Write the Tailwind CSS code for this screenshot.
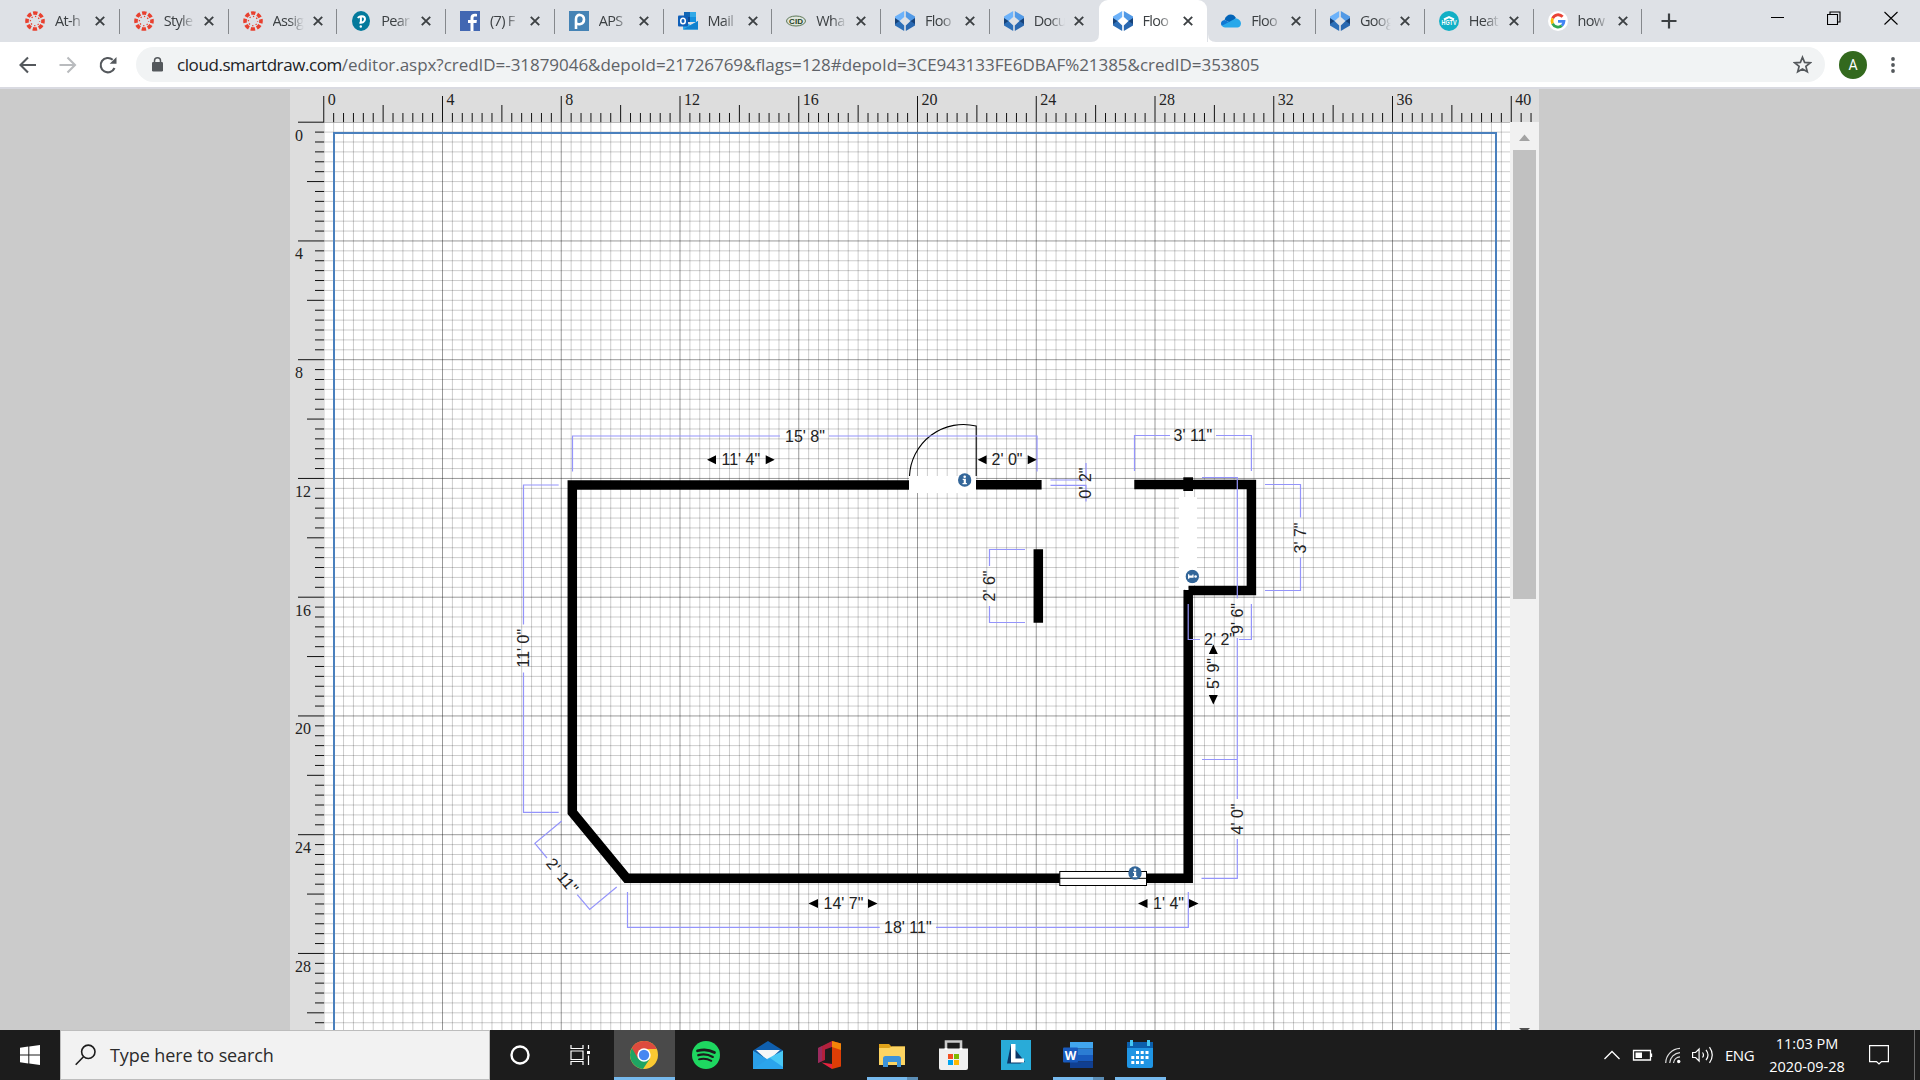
<!DOCTYPE html>
<html lang="en">
<head>
<meta charset="utf-8">
<title>Floor plan</title>
<script src="https://cdn.jsdelivr.net/npm/@tailwindcss/browser@4"></script>
</head>
<body class="w-[1920px] h-[1080px] overflow-hidden bg-[#cbcbcb] font-['Open_Sans',sans-serif] flex flex-col">

<svg class="hidden">
  <defs>
    <symbol id="canvas" viewBox="0 0 20 20"><g fill="none" stroke="#e8402f"><circle cx="10" cy="10" r="8" stroke-width="3.6" stroke-dasharray="4.3 1.98" stroke-dashoffset="2.1"/><circle cx="10" cy="10" r="4.6" stroke-width="1.3" stroke-dasharray="1.3 2.31" stroke-dashoffset=".6"/></g></symbol>
    <symbol id="pearson" viewBox="0 0 20 20"><ellipse cx="10" cy="10" rx="9" ry="10" fill="#047a9c"/><path d="M7 7.2C8 4.6 14 4.3 14 8c0 3-3 4.2-5.600 3.600M9.900 6v6.800" fill="none" stroke="#fff" stroke-width="2"/><circle cx="9.800" cy="15.500" r="1.200" fill="#fff"/></symbol>
    <symbol id="facebook" viewBox="0 0 20 20"><rect width="20" height="20" fill="#4267b2"/><path d="M13.500 20v-8h3l.4-3h-3.400V7.200c0-1 .4-1.600 1.600-1.600H17V3c-4-.7-6.500.4-6.500 4v2H8v3h2.500v8z" fill="#fff"/></symbol>
    <symbol id="aps" viewBox="0 0 20 20"><rect width="20" height="20" fill="#4583b5"/><path d="M7 18V8c0-6 8-5 8 .5S8.500 14 7 12" fill="none" stroke="#fff" stroke-width="2.600"/></symbol>
    <symbol id="outlook" viewBox="0 0 20 20"><path d="M6 1h12v10H6z" fill="#1066b5"/><path d="M12 1h6v5h-6z" fill="#32a9e7"/><path d="M6 6h6v5H6z" fill="#0b4a94"/><path d="M12 6h6v5h-6z" fill="#1490df"/><path d="M5 10l7.500 4L20 10v8.500H5z" fill="#28a8ea"/><path d="M5 18.500L20 10v8.500z" fill="#1282cf"/><rect y="4.500" width="10" height="11" rx="1" fill="#0f5fb8"/><ellipse cx="5" cy="10" rx="2.300" ry="2.800" fill="none" stroke="#fff" stroke-width="1.500"/></symbol>
    <symbol id="cid" viewBox="0 0 20 20"><ellipse cx="10" cy="10" rx="9.500" ry="5" fill="#dfe5dc" stroke="#5c7757"/><text x="10" y="12.900" text-anchor="middle" font-size="8" font-weight="700" font-family="Liberation Sans" textLength="14" fill="#23421f">CID</text></symbol>
    <symbol id="sd" viewBox="0 0 20 20"><path d="M9.200 0v6L4.500 10H0V5.500z" fill="#6cb2fa"/><path d="M10.800 0v6l4.700 4H20V5.500z" fill="#5199e6"/><path d="M0 10l4.500 0 4.700 4.500V20L0 14.500z" fill="#2d6fb8"/><path d="M20 10h-4.500l-4.700 4.500V20l9.200-5.500z" fill="#2a68b0"/><path d="M0 7l4.500 3L0 13zM20 7l-4.500 3 4.500 3z" fill="#174278"/></symbol>
    <symbol id="onedrive" viewBox="0 0 20 20"><path d="M3.500 9C5 3 12 1.500 15 7l-5 5z" fill="#0364b8"/><path d="M3.500 9C1 9.300 0 11 0 12.500q0 1.500 1 2.500l9-3z" fill="#0f78d4"/><path d="M1 14.800L15 7.300c3 .7 5 2.700 5 5.200 0 2.500-2 4-3.500 4H4c-1.500 0-2.500-.8-3-1.700z" fill="#28a8ea"/></symbol>
    <symbol id="hgtv" viewBox="0 0 20 20"><circle cx="10" cy="10" r="10" fill="#12b0c6"/><path d="M5 8.500L10 6l5 2.500" fill="none" stroke="#fff" stroke-width="2"/><text x="10" y="13.500" text-anchor="middle" font-size="6.500" font-weight="700" font-family="Liberation Sans" textLength="15" lengthAdjust="spacingAndGlyphs" fill="#fff">HGTV</text></symbol>
    <symbol id="google" viewBox="0 0 20 20"><circle cx="10" cy="10" r="10" fill="#fff"/><g fill="none" stroke-width="2.800"><path d="M14.600 5.800A6 6 0 0 0 4.600 7.400" stroke="#ea4335"/><path d="M4.600 7.400a6 6 0 0 0 0 5.200" stroke="#fbbc05"/><path d="M4.600 12.600a6 6 0 0 0 9.300 2" stroke="#34a853"/><path d="M13.900 14.600A6 6 0 0 0 16 10.300h-6" stroke="#4285f4"/></g></symbol>
    <symbol id="x" viewBox="0 0 10 10"><path d="M.8.8l8.400 8.400M9.200.8L.8 9.200" stroke="#3c4043" stroke-width="1.900" fill="none"/></symbol>
    <symbol id="info" viewBox="-7 -7 14 14"><circle r="6.700" fill="#336699"/><circle cy="-3.300" r="1.300" fill="#fff"/><path d="M-2-1.300H1.200V3H2.200V4.300H-2.200V3H-1V0H-2z" fill="#fff"/></symbol>
  </defs>
</svg>

<!-- tab strip -->
<header class="h-[42px] shrink-0 bg-[#dee1e6] flex">
  <div id="tabs" class="flex pl-[11px]"></div>
  <svg class="w-4 h-4 mt-[13px] ml-[19px]" viewBox="0 0 16 16"><path d="M8 .5v15M.5 8h15" stroke="#3c4043" stroke-width="2.200"/></svg>
  <div class="flex ml-auto pr-[22px] gap-[43px] pt-[11px]">
    <svg class="w-[14px] h-[14px]" viewBox="0 0 14 14"><path d="M1 6.500h13" stroke="#000"/></svg>
    <svg class="w-[14px] h-[14px]" viewBox="0 0 14 14"><path d="M.5 3.500h10v10H.5zM3 3.500v-2.500h10v10h-2.500" stroke="#000" fill="none" stroke-width="1.100"/></svg>
    <svg class="w-[14px] h-[14px]" viewBox="0 0 14 14"><path d="M.5 1l13 12.500M13.500 1L.5 13.500" stroke="#000" stroke-width="1.100"/></svg>
  </div>
</header>

<!-- toolbar -->
<div class="h-[45px] shrink-0 bg-white flex items-center">
  <svg class="w-[100px] h-5 ml-[18px] shrink-0" viewBox="0 0 100 20" fill="none" stroke-width="2.100"><path d="M18 10H3M10 2.500L2.500 10l7.500 7.500" stroke="#54585c"/><path d="M41.500 10h15M49.500 2.500L57 10l-7.500 7.500" stroke="#b9bbbe"/><path d="M96.500 13a7.200 7.200 0 1 1-1.800-8.200" stroke="#54585c"/><path d="M98.500 2v6.800h-6.800z" fill="#54585c"/></svg>
  <div class="ml-[18px] w-[1689px] h-[35px] rounded-full bg-[#f1f3f4] flex items-center shrink-0 pl-4">
    <svg class="w-[11px] h-[15px]" viewBox="0 0 11 15"><rect y="5" width="11" height="9.500" rx="1.300" fill="#54585c"/><path d="M2.500 6V3.800a3 3 0 0 1 6 0V6" fill="none" stroke="#54585c" stroke-width="1.500"/></svg>
    <div class="ml-[14px] text-[17px] leading-none whitespace-nowrap text-[#5f6368] tracking-[-0.04px]"><span class="text-[#202124] tracking-[-0.42px]">cloud.smartdraw.com</span>/editor.aspx?credID=-31879046&amp;depoId=21726769&amp;flags=128#depoId=3CE943133FE6DBAF%21385&amp;credID=353805</div>
    <svg class="w-[19px] h-[19px] ml-auto mr-[13px]" viewBox="0 0 19 19"><path d="M9.500 2.200l2.100 5.200 5.600.4-4.300 3.600 1.400 5.400-4.800-2.900-4.800 2.900 1.400-5.400L1.800 7.800l5.600-.4z" fill="none" stroke="#54585c" stroke-width="1.700"/></svg>
  </div>
  <div class="ml-[14px] w-7 h-7 rounded-full bg-[#33691e] text-white text-[14px] flex items-center justify-center pt-px font-['Roboto',sans-serif]">A</div>
  <svg class="w-1 h-4 ml-[24px]" viewBox="0 0 4 16" fill="#54585c"><circle cx="2" cy="2" r="1.900"/><circle cx="2" cy="8" r="1.900"/><circle cx="2" cy="14" r="1.900"/></svg>
</div>
<div class="h-[2px] shrink-0 bg-[#d9dae1]"></div>

<!-- editor -->
<main class="h-[941px] shrink-0 pl-[290px] flex">
  <svg class="w-[1249px] h-[941px] bg-white" viewBox="290 89 1249 941">
    <g id="grid"></g>
    <path d="M334 1040V133H1496V1040" fill="none" stroke="#4a80bd" stroke-width="2"/>
    <path d="M290 89H1539V122H324V1030H290z" fill="#ddd"/>
    <g id="ruler" font-family="Liberation Serif" font-size="16" fill="#222"></g>
    <path d="M1510 122H1539V1030H1510z" fill="#f1f1f1"/>
    <path d="M1513 150H1536V599H1513z" fill="#c1c1c1"/>
    <path d="M1519 141H1530L1524.500 134.500z" fill="#a3a3a3"/>
    <path d="M1519 1028H1530L1526 1032H1523z" fill="#505050"/>

    <g fill="none" stroke="#000" stroke-width="9.500">
      <path d="M909 485H572.300V812.300L626.700 878.300H1188.200V590"/>
      <path d="M976 484.800H1041.600M1134.300 484.500H1251.400V590.500H1188.500M1038.300 549.300V622.700"/>
    </g>
    <path d="M1183.300 477.300H1193V491H1183.300z"/>
    <path d="M909 476H976V493H909zM1179 497H1197V585H1188V589H1179z" fill="#fff"/>
    <path d="M909.500 476A54 54 0 0 1 976.200 426V476" fill="none" stroke="#000" stroke-width="1.100"/>
    <rect x="1059.800" y="871.500" width="86.700" height="14" fill="#fff" stroke="#000"/>
    <path d="M1059.800 878.300H1146.500" stroke="#000"/>

    <g fill="none" stroke="#9494fb" stroke-width="1.200">
      <path d="M572.500 471.500V436H780M829 436H1037V471.500"/>
      <path d="M1050.500 480H1086V463M1050.500 485.300H1086V501.500"/>
      <path d="M1134.500 471V435.500H1170M1216 435.500H1251.400V471"/>
      <path d="M1265 484.500H1300.500V517.500M1300.500 557.500V590.500H1265"/>
      <path d="M1025 549.500H989.500V566M989.500 606V622.500H1025"/>
      <path d="M1202 477.500H1237.300V598.500M1237.300 638V799M1202 759.500H1237.300M1237.300 839V878.300H1201.500"/>
      <path d="M1188.200 604V639.500H1200M1239 639.500H1251.400V604"/>
      <path d="M627.500 892V927.300H879.700M936 927.300H1188.300V892"/>
      <path d="M558.700 485H523.500V624.500M523.500 672.500V812.300H558.700"/>
      <path d="M561.700 821L534.900 843.300L547 858M577.200 894.700L589.700 909.500L616.700 887"/>
    </g>
    <g fill="#000">
      <path d="M707 459.700l9-4.500v9zM774.700 459.700l-9-4.500v9zM977.600 459.700l9-4.500v9zM1036.700 459.700l-9-4.500v9z"/>
      <path d="M808.500 903.500l9.500-4.500v9zM877.500 903.500l-9.500-4.500v9zM1138 903.500l9.500-4.500v9zM1198.500 903.500l-9.500-4.500v9z"/>
      <path d="M1213.300 644.500l4.500 9.500h-9zM1213.300 704.500l4.500-9.500h-9z"/>
    </g>
    <g font-family="Liberation Sans" font-size="16" fill="#222">
      <text x="785" y="442">15' 8"</text>
      <text x="721.500" y="465">11' 4"</text>
      <text x="991.500" y="465">2' 0"</text>
      <text x="1173.500" y="441">3' 11"</text>
      <text x="1204" y="645">2' 2"</text>
      <text x="823.500" y="909">14' 7"</text>
      <text x="1153" y="909">1' 4"</text>
      <text x="884" y="933">18' 11"</text>
      <text transform="translate(1090.500 498.500)rotate(-90)">0' 2"</text>
      <text transform="translate(1305.500 553.500)rotate(-90)">3' 7"</text>
      <text transform="translate(994.800 601.500)rotate(-90)">2' 6"</text>
      <text transform="translate(1242.800 634)rotate(-90)">9' 6"</text>
      <text transform="translate(1242.800 834.500)rotate(-90)">4' 0"</text>
      <text transform="translate(1218.800 689)rotate(-90)">5' 9"</text>
      <text transform="translate(528.800 667.500)rotate(-90)">11' 0"</text>
      <text transform="translate(562.300 876)rotate(50.500)" text-anchor="middle" y="5.500" letter-spacing=".3">2' 11"</text>
    </g>
    <use href="#info" x="957.700" y="473" width="14" height="14"/>
    <use href="#info" x="1128" y="866" width="14" height="14"/>
    <g transform="translate(1192.300 576.500)rotate(90)"><use href="#info" x="-7" y="-7" width="14" height="14"/></g>
  </svg>
</main>

<!-- taskbar -->
<footer class="h-[50px] shrink-0 bg-[#1c1c1c] flex text-white">
  <div class="w-[60px] flex items-center justify-center"><svg class="w-5 h-5" viewBox="0 0 20 20"><path d="M0 2.700l8.300-1.100v7.900H0zM9.300 1.400L20 0v9.500H9.300zM0 10.500h8.300v7.900L0 17.300zM9.300 10.500H20V20L9.300 18.600z" fill="#fff"/></svg></div>
  <div class="w-[430px] bg-[#f2f2f2] border border-[#bdbdbd] flex items-center pl-[14px] text-[#2b2b2b]">
    <svg class="w-[22px] h-[22px]" viewBox="0 0 22 22" fill="none" stroke="#1c1c1c" stroke-width="1.600"><circle cx="13.300" cy="7.800" r="6.700"/><path d="M8.500 12.700L.7 20.800"/></svg>
    <span class="ml-[13px] text-[18px] tracking-[-0.1px] leading-none whitespace-nowrap">Type here to search</span>
  </div>
  <div class="w-[60px] flex items-center justify-center"><svg class="w-5 h-5" viewBox="0 0 20 20"><circle cx="10" cy="10" r="8.500" fill="none" stroke="#fff" stroke-width="2.400"/></svg></div>
  <div class="w-[64px] flex items-center pl-[20px]"><svg class="w-[21px] h-5" viewBox="0 0 21 20" fill="none" stroke="#fff" stroke-width="1.200"><path d="M1 0v3.500h12V0M1 6h12v8.500H1zM1 20v-3.500h12V20M18.500 0v4M18.500 10.500V20"/><path d="M17 6h3v3h-3z" fill="#fff" stroke="none"/></svg></div>

  <div class="w-[61px] bg-[#4a4a4a] border-b-[3px] border-[#76b9ed] flex items-center justify-center pt-[3px] pr-px">
    <svg class="w-7 h-7" viewBox="0 0 28 28"><circle cx="14" cy="14" r="14" fill="#fbc932"/><path d="M14 14L1.900 7A14 14 0 0 0 13 28l7-10.500z" fill="#1fa463"/><path d="M1.900 7A14 14 0 0 1 26.600 8H14L8 17.500z" fill="#dd4b3e"/><circle cx="14" cy="14" r="6.700" fill="#fff"/><circle cx="14" cy="14" r="5.200" fill="#4688f1"/></svg>
  </div>
  <div class="w-[62px] flex items-center justify-center"><svg class="w-7 h-7" viewBox="0 0 28 28"><circle cx="14" cy="14" r="14" fill="#1ed760"/><g fill="none" stroke="#1c1c1c" stroke-linecap="round"><path d="M5.500 9.800c6-1.700 12-1.100 17 1.700" stroke-width="2.700"/><path d="M6.300 14.200c5-1.400 10-.8 14.500 1.700" stroke-width="2.300"/><path d="M7 18.300c4.500-1.100 8.500-.6 12.300 1.500" stroke-width="1.900"/></g></svg></div>
  <div class="w-[62px] flex items-center justify-center"><svg class="w-[30px] h-7" viewBox="0 0 30 28"><path d="M0 9.500L15 0l15 9.500L15 19z" fill="#0f5fae"/><path d="M3 9h24L15 20z" fill="#f7f7f7"/><path d="M0 9.500L30 28H0z" fill="#2b9fe8"/><path d="M30 9.500V28L14 18z" fill="#49c8f5"/><path d="M0 28L14 18.500 17 17 30 26v2z" fill="#2ba4ec"/></svg></div>
  <div class="w-[62px] flex items-center justify-center pr-px"><svg class="w-[23px] h-7" viewBox="0 0 23 28"><path d="M0 7L14 0v6L7 8.500V19l-7 3z" fill="#b3203c"/><path d="M14 0l9 2.500v23L14 28z" fill="#dc3e06"/><path d="M14 0l9 2.500V9l-9-3z" fill="#f28409"/><path d="M3.500 21.500L14 23v5z" fill="#e8233f"/><path d="M0 7l4-2v15l-4 2z" fill="#92306d" opacity=".7"/></svg></div>
  <div class="w-[62px] flex flex-col items-center justify-between pt-[14px]"><svg class="w-[26px] h-[23px]" viewBox="0 0 26 23"><path d="M0 0h10l2.500 2.500H26V5H0z" fill="#dfa21a"/><path d="M0 4h10l3-1.500h13V21H0z" fill="#fcd462"/><path d="M4 23V14.500a2.500 2.500 0 0 1 2.500-2.500h13a2.500 2.500 0 0 1 2.500 2.500V23h-4v-5H9v5z" fill="#3d93d9"/></svg><div class="flex w-[51px] h-[3px]"><i class="w-10 bg-[#76b9ed]"></i><i class="flex-1 bg-[#5b8db5]"></i></div></div>
  <div class="w-[62px] flex items-center justify-center pr-px"><svg class="w-[29px] h-[30px]" viewBox="0 0 29 30"><path d="M7 10V1.500h15V10" fill="none" stroke="#ccc" stroke-width="2.600"/><path d="M0 8.500h29V28q0 2-2 2H2q-2 0-2-2z" fill="#f0f0f0"/><path d="M9 14h5v5H9z" fill="#f25022"/><path d="M15 14h5v5h-5z" fill="#7fba00"/><path d="M9 20h5v5H9z" fill="#00a4ef"/><path d="M15 20h5v5h-5z" fill="#ffb900"/><path d="M7 8v2M22 8v2" stroke="#fff" stroke-width="2.600"/></svg></div>
  <div class="w-[62px] flex items-center justify-center"><div class="w-[30px] h-[30px] bg-[#29abd8]"><svg viewBox="0 0 30 30"><path d="M10 4L6 23.500h13l5-1.500z" fill="#0c3766"/><path d="M10 4h4.500v14.500H23V22.500H10z" fill="#fff"/></svg></div></div>
  <div class="w-[62px] flex flex-col items-center justify-between pt-3"><svg class="w-[30px] h-[26px]" viewBox="0 0 30 26"><path d="M7 0h23v6.500H7z" fill="#41a5ee"/><path d="M7 6.500h23V13H7z" fill="#2b7cd3"/><path d="M7 13h23v6.500H7z" fill="#185abd"/><path d="M7 19.500h23V26H7z" fill="#103f91"/><rect y="5.500" width="15" height="15" rx="1" fill="#185abd"/><text x="7.500" y="17.500" font-family="Open Sans" font-size="12" font-weight="700" fill="#fff" text-anchor="middle">W</text></svg><div class="flex w-[51px] h-[3px]"><i class="w-10 bg-[#76b9ed]"></i><i class="flex-1 bg-[#5b8db5]"></i></div></div>
  <div class="w-[62px] flex flex-col items-center justify-between pt-[10px]"><svg class="w-[26px] h-7" viewBox="0 0 26 28"><path d="M0 2h26v24q0 2-2 2H2q-2 0-2-2z" fill="#1f95e4"/><path d="M0 2h26v6H0z" fill="#0b60ad"/><path d="M3 0h3v6H3zM20 0h3v6h-3z" fill="#45c8f5"/><path d="M9 11h3v3H9zM13.700 11h3v3h-3zM18.500 11h3v3h-3zM4.300 16h3v3h-3zM9 16h3v3H9zM13.700 16h3v3h-3zM18.500 16h3v3h-3zM4.300 21h3v3h-3zM9 21h3v3H9zM13.700 21h3v3h-3z" fill="#fff"/></svg><div class="w-[51px] h-[3px] bg-[#76b9ed]"></div></div>

  <div class="ml-auto flex items-center">
    <svg class="w-[110px] h-5" viewBox="0 0 110 20" fill="none" stroke="#fff" stroke-width="1.300"><path d="M.5 14L8 6.500l7.500 7.500M29.500 5.500h17v9.500h-17zM47.500 8.500v3.500"/><path d="M31.500 7.500h6.500v5.500h-6.500z" fill="#fff" stroke="none"/><path d="M61.700 18A15 15 0 0 1 76 3.300M65.700 18A11 11 0 0 1 76 7.600M69.500 18A7 7 0 0 1 76 11.800" stroke-width="1.200" stroke="#ddd"/><circle cx="74.700" cy="16.500" r="1.700" fill="#fff" stroke="none"/><path d="M88.600 7.500h3l3.500-3.500v12l-3.500-3.500h-3zM98.500 7.500q2 2.500 0 5M102 4.800q4 5.200 0 10.400M105.500 2.200q5.500 7.800 0 15.600" stroke-width="1.200"/></svg>
    <span class="text-[15px] ml-[11px] w-[40px] tracking-[-0.5px]">ENG</span>
    <div class="w-[84px] text-[14.500px] leading-[23px] text-center tracking-[0px] -mt-px whitespace-nowrap"><div>11:03 PM</div><div>2020-09-28</div></div>
    <svg class="w-[20px] h-5 ml-[20px]" viewBox="0 0 20 20"><path d="M.6.600h18.800v16H12.500L10 19 7.500 16.600H.6z" fill="none" stroke="#fff" stroke-width="1.200"/></svg>
    <div class="w-px h-[50px] bg-[#6b6b6b] ml-[25px] mr-[5px]"></div>
  </div>
</footer>

<script>
  const tabs = [['canvas','At-h'],['canvas','Style'],['canvas','Assig'],['pearson','Pear'],['facebook','(7) F'],['aps','APS'],['outlook','Mail'],['cid','Wha'],['sd','Floo'],['sd','Docu'],['sd','Floo'],['onedrive','Floo'],['sd','Goog'],['hgtv','Heat'],['google','how']];
  const active = 10;
  document.getElementById('tabs').innerHTML = tabs.map(([icon, title], i) => {
    const on = i === active;
    return `<div class="relative w-[108.75px] h-[42px] flex items-center pl-[14px] ${on ? 'bg-white rounded-t-[9px]' : ''}">
      ${on ? '<svg class="absolute -left-2 bottom-0 w-[125px] h-2" viewBox="0 0 125 8"><path d="M0 8Q8 8 8 0V8zM125 8Q117 8 117 0V8z" fill="#fff"/></svg>' : ''}
      <svg class="w-5 h-5 shrink-0"><use href="#${icon}"/></svg>
      <span class="ml-[10px] w-[31px] overflow-hidden whitespace-nowrap text-[14.5px] tracking-[-0.7px] text-[#3c4043] mask-r-from-50%">${title}</span>
      <svg class="w-[10px] h-[10px] ml-[9px] shrink-0"><use href="#x"/></svg>
      ${on || i === active - 1 ? '' : '<i class="w-px h-[25px] bg-[#85888c] ml-auto"></i>'}
    </div>`;
  }).join('');

  const X0 = 323.75, Y0 = 122, STEP = 118.75 / 12;
  let minor = '', major = '', ticks = '', labels = '';
  for (let i = 0; i <= 122; i++) {
    const x = X0 + i * STEP, len = i % 12 === 0 ? 26 : i % 6 === 0 ? 17 : 9;
    if (i % 12 === 0) { major += `M${x} 122V1030`; labels += `<text x="${x + 4}" y="105">${i / 3}</text>`; }
    else minor += `M${x} 122V1030`;
    ticks += `M${x} ${122 - len}V122`;
  }
  for (let i = 0; i <= 91; i++) {
    const y = Y0 + .2 + i * STEP, len = i % 12 === 0 ? 26 : i % 6 === 0 ? 17 : 9;
    if (i % 12 === 0) { major += `M324 ${y}H1510`; labels += `<text x="295" y="${y + 18.4}">${i / 3}</text>`; }
    else minor += `M324 ${y}H1510`;
    ticks += `M${324 - len} ${y}H324`;
  }
  document.getElementById('grid').innerHTML = `<path d="${minor}" stroke="#000" stroke-opacity=".2"/><path d="${major}" stroke="#000" stroke-opacity=".4"/>`;
  document.getElementById('ruler').innerHTML = `<path d="${ticks}" stroke="#111"/>${labels}`;
</script>
</body>
</html>
